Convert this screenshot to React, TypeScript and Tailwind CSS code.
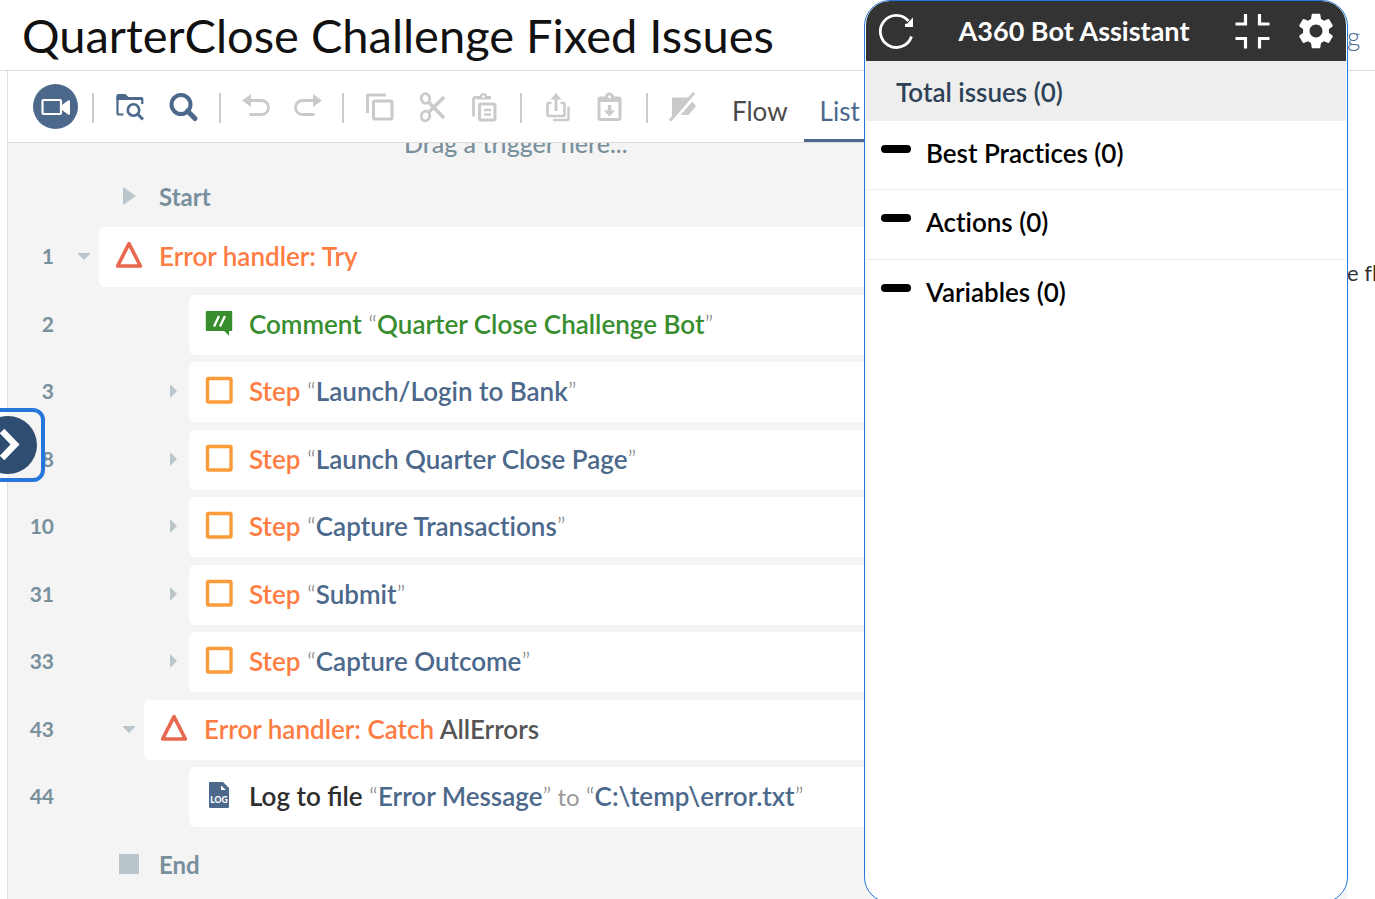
import type { ReactNode } from "react";

type Tone = "orange" | "green" | "blue" | "dark" | "gray" | "quote" | "muted";
type Part = [Tone, string];
type IconName = "triangle" | "comment" | "step" | "log";

type Row = {
  line: number;
  level: 0 | 1 | 2;
  caret?: "open" | "closed";
  icon: IconName;
  parts: Part[];
};

const tones: Record<Tone, string> = {
  orange: "font-semibold text-[#ff7c43]",
  green: "font-semibold text-[#388e2f]",
  blue: "font-semibold text-[#4c698c]",
  dark: "font-semibold text-[#2d2d2d] [font-variant-ligatures:normal]",
  gray: "font-semibold text-[#555555]",
  quote: "font-light text-[#777777]",
  muted: "text-[24px] font-normal text-[#999999]",
};

const indents = ["w-[15px]", "w-[60px]", "w-[105px]"];

const step = (line: number, name: string): Row => ({
  line,
  level: 2,
  caret: "closed",
  icon: "step",
  parts: [["orange", "Step "], ["quote", "“"], ["blue", name], ["quote", "”"]],
});

const rows: Row[] = [
  { line: 1, level: 0, caret: "open", icon: "triangle", parts: [["orange", "Error handler: Try"]] },
  {
    line: 2,
    level: 2,
    icon: "comment",
    parts: [["green", "Comment "], ["quote", "“"], ["green", "Quarter Close Challenge Bot"], ["quote", "”"]],
  },
  step(3, "Launch/Login to Bank"),
  step(8, "Launch Quarter Close Page"),
  step(10, "Capture Transactions"),
  step(31, "Submit"),
  step(33, "Capture Outcome"),
  {
    line: 43,
    level: 1,
    caret: "open",
    icon: "triangle",
    parts: [["orange", "Error handler: Catch "], ["gray", "AllErrors"]],
  },
  {
    line: 44,
    level: 2,
    icon: "log",
    parts: [
      ["dark", "Log to file "],
      ["quote", "“"],
      ["blue", "Error Message"],
      ["quote", "”"],
      ["muted", " to "],
      ["quote", "“"],
      ["blue", "C:\\temp\\error.txt"],
      ["quote", "”"],
    ],
  },
];

function RowIcon({ name }: { name: IconName }) {
  if (name === "triangle")
    return (
      <svg className="mb-0.5 size-7" viewBox="0 0 28 28" fill="none" aria-hidden="true">
        <path d="M14 2.6 L25.4 25 H2.6 Z" stroke="#e8674f" strokeWidth="3.6" strokeLinejoin="round" />
      </svg>
    );
  if (name === "comment")
    return (
      <svg className="mb-0.5 size-7" viewBox="0 0 28 28" aria-hidden="true">
        <path d="M1.8 2h24.4q1 0 1 1v18q0 1-1 1H24v4.8L19.200 22H1.800q-1 0-1-1V3q0-1 1-1z" fill="#388e2f" />
        <path d="M9 17.500 14 7M15 17.500 20 7" stroke="#fff" strokeWidth="2.300" />
      </svg>
    );
  if (name === "step")
    return (
      <svg className="mb-0.5 size-7" viewBox="0 0 28 28" fill="none" aria-hidden="true">
        <rect x="2.500" y="2.500" width="23.500" height="23.500" rx="1" stroke="#fb9b3a" strokeWidth="3.400" />
      </svg>
    );
  return (
    <svg className="mb-0.5 size-7" viewBox="0 0 28 28" aria-hidden="true">
      <path d="M5 1h13l6 6v19q0 1-1 1H5q-1 0-1-1V2q0-1 1-1z" fill="#4c698c" />
      <path d="M16 4.500v4.500h5z" fill="#fff" />
      <text x="14" y="21.500" textAnchor="middle" fontFamily="Lato, sans-serif" fontWeight="900" fontSize="8.500" fill="#fff">
        LOG
      </text>
    </svg>
  );
}

function Caret({ open }: { open: boolean }) {
  return (
    <svg className="size-4" viewBox="0 0 16 16" fill="#b9c5ca" aria-hidden="true">
      {open ? <path d="M2 5h12v1l-6 6-6-6z" /> : <path d="M4 2h1l6 6-6 6H4z" />}
    </svg>
  );
}

function Tool({ label, className, children }: { label: string; className?: string; children: ReactNode }) {
  return (
    <button type="button" aria-label={label} className={`size-8 shrink-0 ${className ?? ""}`}>
      <svg className="size-8" viewBox="0 0 32 32" fill="none" aria-hidden="true">
        {children}
      </svg>
    </button>
  );
}

function Divider({ className }: { className: string }) {
  return <span className={`mt-[3px] h-[30px] w-0.5 shrink-0 bg-[#cccccc] ${className}`} />;
}

function Toolbar() {
  const g = "#cacaca";
  const b = "#4c698c";
  return (
    <div className="flex h-[72px] shrink-0 items-center border-b border-[#dddddd] bg-white pl-[25px]">
      <button
        type="button"
        aria-label="Record"
        className="flex size-[45px] shrink-0 items-center justify-center rounded-full bg-[#4c698c]"
      >
        <svg className="size-8" viewBox="0 0 32 32" fill="none" aria-hidden="true">
          <rect x="2.500" y="9" width="18.500" height="14" rx="1" stroke="#fff" strokeWidth="2.200" />
          <path d="M22 14l6-4.500q2-.8 2 1v12q0 1.800-2 1L22 19z" fill="#fff" />
        </svg>
      </button>
      <Divider className="ml-3.5" />
      <Tool label="Search files" className="ml-5">
        <path d="M9.500 23.500H5q-1.500 0-1.500-1.500V6" stroke={b} strokeWidth="2.200" />
        <path d="M2.400 5q0-2 2-2h7l3 3h13q2 0 2 2v5h-2.200v-4H2.400z" fill={b} />
        <circle cx="19.500" cy="19" r="5.700" stroke={b} strokeWidth="2.600" />
        <path d="M23.500 23l5.500 5.500" stroke={b} strokeWidth="3" />
      </Tool>
      <Tool label="Search" className="ml-[21px]">
        <circle cx="14" cy="13.500" r="9.500" stroke={b} strokeWidth="4" />
        <path d="M20.500 20l7.500 7.500" stroke={b} strokeWidth="5" strokeLinecap="round" />
      </Tool>
      <Divider className="ml-5" />
      <Tool label="Undo" className="ml-5">
        <path d="M1 9.500l9-6.500v13z" fill={g} />
        <path d="M8 9.500h12.500a7 7 0 0 1 0 14H9.500" stroke={g} strokeWidth="2.800" strokeLinecap="round" />
      </Tool>
      <Tool label="Redo" className="ml-5">
        <path d="M29 9.500l-9-6.500v13z" fill={g} />
        <path d="M22 9.500H9.500a7 7 0 0 0 0 14h11" stroke={g} strokeWidth="2.800" strokeLinecap="round" />
      </Tool>
      <Divider className="ml-[17px]" />
      <Tool label="Copy" className="ml-5">
        <path d="M3.500 22V4.500q0-.5.500-.5H22" stroke={g} strokeWidth="3" />
        <rect x="9.500" y="10" width="18.500" height="18" rx="1.500" stroke={g} strokeWidth="3" />
      </Tool>
      <Tool label="Cut" className="ml-5">
        <ellipse cx="9.500" cy="7.500" rx="4.200" ry="4.800" stroke={g} strokeWidth="2.800" transform="rotate(-20 9.500 7.500)" />
        <ellipse cx="9.500" cy="25" rx="4.200" ry="4.800" stroke={g} strokeWidth="2.800" transform="rotate(20 9.500 25)" />
        <path d="M12.500 11L28 27M12.500 21.500L28 6" stroke={g} strokeWidth="3.400" />
      </Tool>
      <Tool label="Paste" className="ml-5">
        <path d="M5.500 25.500V8.500q0-2 2-2H23" stroke={g} strokeWidth="2.800" />
        <path d="M9 8.500V6.500q0-1 1-1h2a3.500 3.500 0 0 1 7 0h2q1 0 1 1v2z" fill={g} />
        <circle cx="15.500" cy="5.500" r="1.300" fill="#fff" />
        <rect x="11.500" y="13" width="15.500" height="16" rx="1.500" stroke={g} strokeWidth="3" />
        <path d="M16 19h7M16 23.500h7" stroke={g} strokeWidth="2.400" />
      </Tool>
      <Divider className="ml-5" />
      <Tool label="Export" className="ml-5">
        <path d="M9.500 12H6.500q-1 0-1 1v11q0 1 1 1h15q1 0 1-1V13q0-1-1-1h-3" stroke={g} strokeWidth="2.600" />
        <path d="M14 20V6" stroke={g} strokeWidth="3" />
        <path d="M8.500 8.500L14 2l5.500 6.500z" fill={g} />
        <path d="M11 29h14q1.500 0 1.500-1.500V15.500" stroke={g} strokeWidth="2.400" />
      </Tool>
      <Tool label="Import" className="ml-5">
        <rect x="5" y="7" width="21" height="21.500" rx="1.500" stroke={g} strokeWidth="3" />
        <path d="M6 11V6h5a4.500 4.500 0 0 1 9 0h5v5z" fill={g} />
        <circle cx="15.500" cy="5.800" r="1.500" fill="#fff" />
        <path d="M15.500 14v7" stroke={g} strokeWidth="3.400" />
        <path d="M9.800 19.500h11.400L15.500 25.500z" fill={g} />
      </Tool>
      <Divider className="ml-5" />
      <Tool label="Disable" className="ml-5">
        <path d="M4 6.500h17.500L4 26z" fill={g} />
        <path d="M24.500 10.500l3.500 4.500-7.500 9h-8z" fill={g} />
        <path d="M2 29.500L26 2" stroke={g} strokeWidth="3" />
      </Tool>
      <nav className="ml-4 flex self-stretch text-[26px] leading-8 text-[#4a4a4a]" aria-label="View">
        <a href="#flow" className="flex items-end px-4 pb-[15px]">
          Flow
        </a>
        <a href="#list" className="flex items-end border-b-3 border-[#4c698c] px-4 pb-3 text-[#4c698c]">
          List
        </a>
      </nav>
    </div>
  );
}

function Marker({ label, children }: { label: string; children: ReactNode }) {
  return (
    <div className="flex h-15 items-center gap-4 pl-[107px] text-[24px] leading-8 font-bold text-[#78909c]">
      <span className="mb-0.5 flex w-7 justify-center">{children}</span>
      {label}
    </div>
  );
}

function AssistantPanel() {
  return (
    <section className="absolute top-0 right-[27px] -bottom-1 w-[484px] overflow-hidden rounded-[26px] border border-[#2677d9] bg-white px-px">
      <header className="flex h-[60px] items-center rounded-t-[24px] bg-[#333333] text-white">
        <button type="button" aria-label="Refresh" className="ml-3 size-9">
          <svg className="size-9" viewBox="0 0 36 36" fill="none" aria-hidden="true">
            <path d="M33.500 23.500A16 16 0 1 1 30.500 8" stroke="#fff" strokeWidth="2.800" />
            <path d="M35 4.500v9.500h-8v-3l2.500-.5 3-3.500z" fill="#fff" />
          </svg>
        </button>
        <h2 className="flex-1 text-center text-[27px] leading-8 font-bold">A360 Bot Assistant</h2>
        <button type="button" aria-label="Collapse" className="mr-7 size-9">
          <svg className="size-9" viewBox="0 0 36 36" fill="none" stroke="#fff" strokeWidth="3.200" aria-hidden="true">
            <path d="M1.500 11h10V1M25.500 1v10h10M1.500 25.500h10v10M25.500 35.500v-10h10" />
          </svg>
        </button>
        <button type="button" aria-label="Settings" className="mr-3 size-9">
          <svg className="size-9" viewBox="2 2 20 20" fill="#fff" aria-hidden="true">
            <path d="M19.140 12.940c.04-.3.060-.61.060-.94 0-.32-.02-.64-.07-.94l2.030-1.580c.18-.14.230-.41.120-.61l-1.920-3.320c-.12-.22-.37-.29-.59-.22l-2.390.96c-.5-.38-1.030-.7-1.620-.94l-.36-2.540c-.04-.24-.24-.41-.48-.41h-3.840c-.24 0-.43.170-.47.410l-.36 2.540c-.59.240-1.130.570-1.620.940l-2.390-.96c-.22-.08-.47 0-.59.220L2.740 8.870c-.12.210-.08.470.120.610l2.030 1.580c-.05.300-.09.630-.09.940s.02.640.070.940l-2.030 1.580c-.18.140-.23.410-.12.610l1.920 3.320c.12.220.37.290.59.220l2.390-.96c.5.380 1.030.7 1.620.940l.36 2.540c.05.240.24.410.48.410h3.840c.24 0 .44-.17.470-.41l.36-2.540c.59-.24 1.130-.56 1.620-.94l2.390.96c.22.080.47 0 .59-.22l1.920-3.320c.12-.22.070-.47-.12-.61l-2.010-1.580zM12 15.600c-1.980 0-3.600-1.620-3.600-3.600s1.620-3.600 3.600-3.600 3.600 1.620 3.600 3.600-1.620 3.600-3.600 3.600z" />
          </svg>
        </button>
      </header>
      <p className="flex h-15 items-center bg-[#eeeeee] px-[30px] pt-0.5 text-[26px] leading-8 font-semibold text-[#2d4256]">
        Total issues (0)
      </p>
      <ul>
        {["Best Practices (0)", "Actions (0)", "Variables (0)"].map((label) => (
          <li key={label} className="h-[70px] border-b border-[#ededed] px-[15px] first:h-[69px] last:border-b-0">
            <button type="button" className="flex items-start gap-[15px] pt-4 text-[26px] leading-8 font-semibold text-black">
              <span className="mt-2 h-2 w-[30px] rounded-full bg-black" />
              {label}
            </button>
          </li>
        ))}
      </ul>
    </section>
  );
}

export default function App() {
  return (
    <div className="relative flex h-screen flex-col overflow-hidden bg-white font-['Lato',sans-serif] [font-variant-ligatures:none]">
      <header className="flex h-[71px] shrink-0 items-center justify-between border-b border-[#dddddd] pl-[22px]">
        <h1 className="text-[47px] leading-[52px] whitespace-nowrap text-[#111111]">QuarterClose Challenge Fixed Issues</h1>
        <a href="#more" className="w-7 shrink-0 pt-0.5 text-[26px] leading-8 font-light text-[#4c698c]">
          g
        </a>
      </header>
      <div className="flex min-h-0 flex-1 pl-[7px]">
        <main className="flex min-w-0 flex-1 flex-col border-l border-[#dddddd] bg-[#f4f4f4]">
          <Toolbar />
          <div className="min-h-0 flex-1 overflow-hidden">
            <p className="-mt-4 ml-[396px] h-10 text-[25px] leading-8 font-medium text-[#78909c]">Drag a trigger here...</p>
            <Marker label="Start">
              <svg className="h-5 w-4" viewBox="0 0 16 20" fill="#b9c5ca" aria-hidden="true">
                <path d="M2 1v18l13-9z" />
              </svg>
            </Marker>
            <ol>
              {rows.map((row) => (
                <li key={row.line} className="flex h-15 items-center odd:mb-2 even:mb-[7px]">
                  <span className="w-[46px] shrink-0 pb-0.5 text-right text-[21px] leading-8 font-bold text-[#78909c]">
                    {row.line}
                  </span>
                  <span className={`${indents[row.level]} shrink-0`} />
                  <span className="flex w-[30px] shrink-0 justify-center pb-[3px]">
                    {row.caret && (
                      <button type="button" aria-label={`Toggle line ${row.line}`}>
                        <Caret open={row.caret === "open"} />
                      </button>
                    )}
                  </span>
                  <div className="flex h-15 flex-1 items-center gap-4 rounded-l-md bg-white pb-0.5 pl-4">
                    <RowIcon name={row.icon} />
                    <span className="text-[26px] leading-8 whitespace-pre">
                      {row.parts.map(([tone, text], i) => (
                        <span key={i} className={tones[tone]}>
                          {text}
                        </span>
                      ))}
                    </span>
                  </div>
                </li>
              ))}
            </ol>
            <Marker label="End">
              <span className="size-5 bg-[#b9c5ca]" />
            </Marker>
          </div>
        </main>
        <aside className="w-7 shrink-0 overflow-hidden pt-[186px] text-[22px] leading-8 whitespace-nowrap text-[#333333]">
          e fl
        </aside>
      </div>
      <button
        type="button"
        aria-label="Expand sidebar"
        className="absolute top-[408px] -left-[30px] flex h-[74px] w-[75px] items-center justify-center rounded-xl border-4 border-[#2677d9] bg-[linear-gradient(to_right,#ffffff_33px,#f4f4f4_33px)]"
      >
        <span className="flex size-[58px] items-center justify-center rounded-full bg-[#2f4d70]">
          <svg className="size-9" viewBox="0 0 36 36" fill="none" aria-hidden="true">
            <path d="M12 4l13 13.500L12 31" stroke="#fff" strokeWidth="6.500" />
          </svg>
        </span>
      </button>
      <AssistantPanel />
    </div>
  );
}
